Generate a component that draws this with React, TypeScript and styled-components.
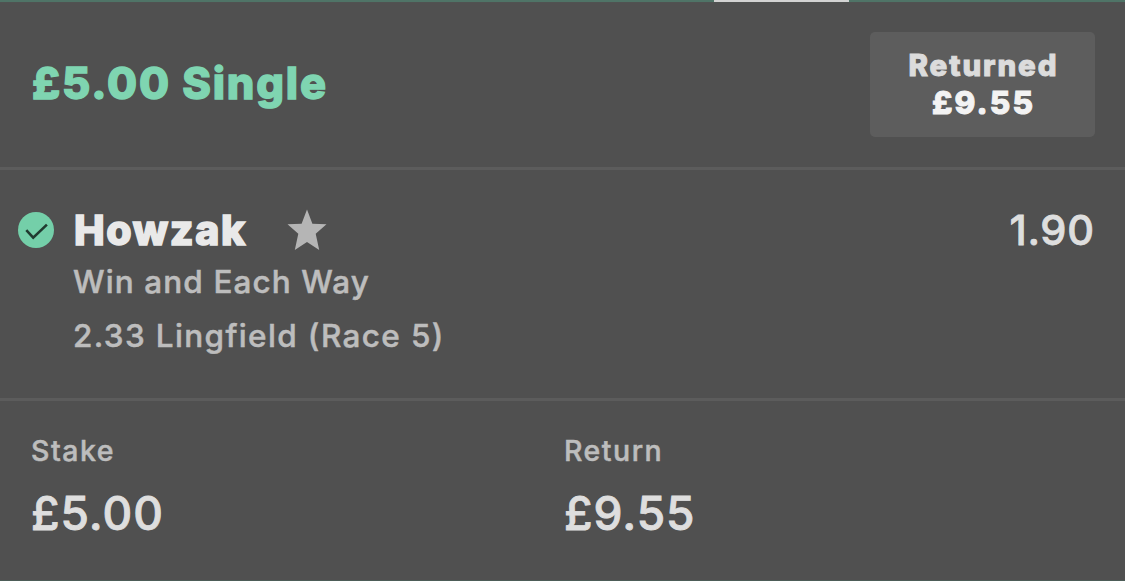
import styled, { createGlobalStyle } from 'styled-components'

const GlobalStyle = createGlobalStyle`
  body {
    margin: 0;
    background: #505050;
  }
`

const BetCard = styled.div`
  box-sizing: border-box;
  display: flex;
  flex-direction: column;
  height: 581px;
  background: #505050;
  border-bottom: 1px solid #4d5d58;
  font-family: Inter, 'Liberation Sans', sans-serif;
  overflow: hidden;
`

const TabLine = styled.div`
  height: 2px;
  padding-left: 714px;
  background: #4f7467;
  border-bottom: 1px solid #505251;
`

const ActiveTab = styled.div`
  width: 135px;
  height: 2px;
  background: #d3d3d3;
`

const Header = styled.header`
  display: flex;
  justify-content: space-between;
  align-items: center;
  box-sizing: border-box;
  height: 167px;
  padding: 0 30px 2px 32px;
  border-bottom: 3px solid #5c5c5c;
`

const Text = styled.div<{
  $size: number
  $line: number
  $weight?: number
  $spacing?: number
  $stroke?: number
  $color?: string
}>`
  font-size: ${(p) => p.$size}px;
  line-height: ${(p) => p.$line}px;
  font-weight: ${(p) => p.$weight ?? 500};
  letter-spacing: ${(p) => p.$spacing ?? 0}px;
  margin-right: -${(p) => p.$spacing ?? 0}px;
  color: ${(p) => p.$color ?? '#bdbdbd'};
  -webkit-text-stroke: ${(p) => p.$stroke ?? 0.5}px currentColor;
  white-space: nowrap;
`

const Title = styled(Text)`
  padding-bottom: 2px;
`

const ReturnedBox = styled.div`
  display: flex;
  flex-direction: column;
  justify-content: center;
  align-items: center;
  width: 225px;
  height: 105px;
  border-radius: 5px;
  background: #5d5d5d;
`

const Selection = styled.section`
  display: flex;
  box-sizing: border-box;
  height: 231px;
  padding: 36px 31px 0 18px;
  border-bottom: 3px solid #5c5c5c;
`

const TickIcon = styled.svg`
  width: 37px;
  height: 37px;
  margin: 6px 19px 0 0;
`

const Details = styled.div`
  flex: 1;
`

const NameRow = styled.div`
  display: flex;
  align-items: center;
`

const StarIcon = styled.svg`
  width: 40px;
  height: 42px;
  margin-left: 42px;
`

const Subline = styled(Text)`
  margin-left: -1px;
`

const Totals = styled.section`
  display: grid;
  grid-template-columns: 533px 1fr;
  padding: 30px 31px 0;
`

const App = () => {
  return (
    <BetCard>
      <GlobalStyle />
      <TabLine>
        <ActiveTab />
      </TabLine>
      <Header>
        <Title $size={43.5} $line={50} $weight={800} $spacing={1.8} $stroke={1.3} $color="#7fd5b1">
          £5.00 Single
        </Title>
        <ReturnedBox>
          <Text $size={29.5} $line={38} $weight={800} $spacing={1.9} $stroke={1} $color="#dcdcdc">
            Returned
          </Text>
          <Text $size={31.5} $line={38} $weight={800} $spacing={2.2} $stroke={1} $color="#f3f3f3">
            £9.55
          </Text>
        </ReturnedBox>
      </Header>
      <Selection>
        <TickIcon viewBox="0 0 37 37">
          <circle cx="18" cy="18" r="18" fill="#74cfa9" />
          <path d="M8.3 18.2l6.9 7.4L28.9 12.6" fill="none" stroke="#213a30" strokeWidth="2.6" />
        </TickIcon>
        <Details>
          <NameRow>
            <Text $size={41} $line={48} $weight={800} $spacing={1.6} $stroke={1.5} $color="#e9e9e9">
              Howzak
            </Text>
            <StarIcon viewBox="0 0 40 42">
              <path
                d="M20 .5l5.4 14.3 14.1.4-10.8 9.6L32.2 41 20 33 7.8 41l3.5-16.2L.5 15.2l14.1-.4z"
                fill="#b5b5b5"
              />
            </StarIcon>
          </NameRow>
          <Subline $size={31.5} $line={55} $spacing={1.1}>
            Win and Each Way
          </Subline>
          <Subline $size={31.5} $line={54} $spacing={1.35}>
            2.33 Lingfield (Race 5)
          </Subline>
        </Details>
        <Text $size={41.5} $line={49} $spacing={0.7} $stroke={0.8} $color="#dedede">
          1.90
        </Text>
      </Selection>
      <Totals>
        <div>
          <Text $size={28.5} $line={40} $spacing={1.5}>
            Stake
          </Text>
          <Text $size={46} $line={84} $spacing={1} $stroke={0.9} $color="#dedede">
            £5.00
          </Text>
        </div>
        <div>
          <Text $size={28.5} $line={40} $spacing={1.5}>
            Return
          </Text>
          <Text $size={46} $line={84} $spacing={1} $stroke={0.9} $color="#dedede">
            £9.55
          </Text>
        </div>
      </Totals>
    </BetCard>
  )
}

export default App
